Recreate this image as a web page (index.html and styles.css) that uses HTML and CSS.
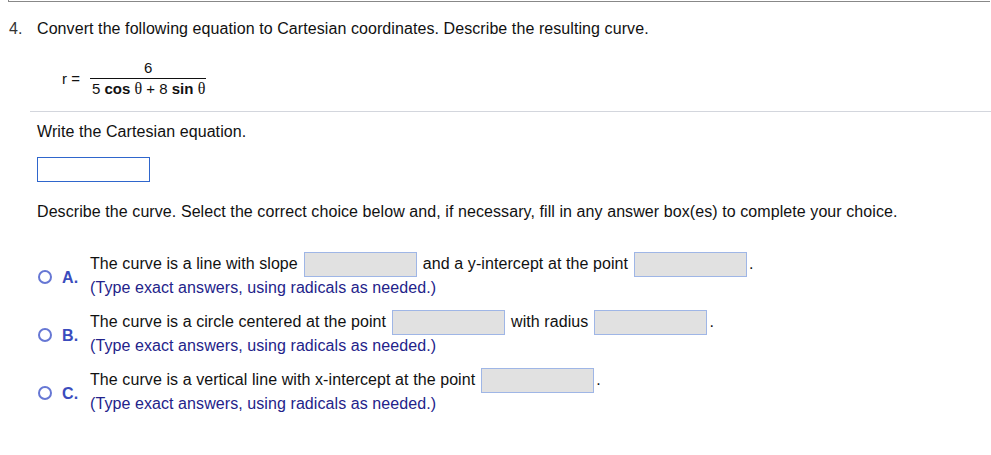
FILE: index.html
```html
<!DOCTYPE html>
<html>
<head>
<meta charset="utf-8">
<link rel="stylesheet" href="styles.css">
</head>
<body>
<div class="topbar"></div>
<div class="question">
  <div class="num">4.</div>
  <div class="title">Convert the following equation to Cartesian coordinates. Describe the resulting curve.</div>
</div>
<div class="equation">
  <span class="lhs">r =</span>
  <span class="frac">
    <span class="numer">6</span>
    <span class="denom">5 <b>cos</b> <span class="th">θ</span> + 8 <b>sin</b> <span class="th">θ</span></span>
  </span>
</div>
<div class="sep"></div>
<div class="body">
  <p class="prompt">Write the Cartesian equation.</p>
  <div class="eqbox"></div>
  <p class="prompt2">Describe the curve. Select the correct choice below and, if necessary, fill in any answer box(es) to complete your choice.</p>

  <div class="choices">
    <div class="choice">
      <span class="radio"></span><span class="letter">A.</span>
      <div class="ctext">
        <div class="line1">The curve is a line with slope<span class="box"></span>and a y-intercept at the point<span class="box"></span><span class="dot">.</span></div>
        <div class="hint">(Type exact answers, using radicals as needed.)</div>
      </div>
    </div>
    <div class="choice">
      <span class="radio"></span><span class="letter">B.</span>
      <div class="ctext">
        <div class="line1">The curve is a circle centered at the point<span class="box"></span>with radius<span class="box"></span><span class="dot">.</span></div>
        <div class="hint">(Type exact answers, using radicals as needed.)</div>
      </div>
    </div>
    <div class="choice">
      <span class="radio"></span><span class="letter">C.</span>
      <div class="ctext">
        <div class="line1">The curve is a vertical line with x-intercept at the point<span class="box"></span><span class="dot">.</span></div>
        <div class="hint">(Type exact answers, using radicals as needed.)</div>
      </div>
    </div>
  </div>
</div>
</body>
</html>
```
FILE: styles.css
```css
html, body {
  margin: 0;
  padding: 0;
  background: #fff;
}
body {
  font-family: "Liberation Sans", Arial, sans-serif;
  font-size: 16px;
  letter-spacing: 0.08px;
  color: #111;
  line-height: 18px;
}
.topbar {
  margin-left: 8px;
  margin-right: 1px;
  height: 1px;
  border-left: 1px solid #888;
  border-bottom: 1px solid #888;
}
.question {
  display: flex;
  margin-top: 18px;
}
.num {
  padding-left: 9px;
  box-sizing: border-box;
  width: 37px;
  color: #333;
}
.equation {
  display: flex;
  align-items: center;
  margin-left: 62px;
  margin-top: 21px;
  font-size: 15px;
  letter-spacing: 0;
}
.lhs {
  margin-right: 10px;
  margin-top: 2px;
}
.frac {
  display: inline-flex;
  flex-direction: column;
  align-items: center;
}
.numer {
  line-height: 17px;
  padding-bottom: 2px;
}
.denom {
  border-top: 1px solid #111;
  padding: 1px 1px 0 2px;
  line-height: 17px;
}
.denom b {
  font-weight: bold;
}
.th {
  font-family: "Liberation Serif", "Times New Roman", serif;
  font-size: 16px;
}
.sep {
  margin-left: 30px;
  margin-top: 14px;
  height: 1px;
  background: #d3d6dd;
}
.body {
  padding-left: 37px;
}
.prompt {
  margin: 11px 0 0 0;
}
.eqbox {
  margin-top: 16px;
  width: 111px;
  height: 23px;
  border: 1px solid #2f66cc;
}
.prompt2 {
  margin: 21px 0 0 0;
}
.choices {
  margin-top: 30px;
  display: flex;
  flex-direction: column;
  gap: 12px;
}
.choice {
  display: flex;
  align-items: flex-start;
}
.radio {
  flex: none;
  width: 10px;
  height: 10px;
  border: 2px solid #6677d4;
  border-radius: 50%;
  margin-top: 19px;
  margin-left: 1px;
}
.letter {
  flex: none;
  width: 28px;
  margin-left: 10px;
  margin-top: 18px;
  font-weight: bold;
  color: #3a4cbd;
}
.line1 {
  display: flex;
  align-items: center;
  height: 26px;
}
.box {
  display: inline-block;
  width: 111px;
  height: 23px;
  background: #e1e1e1;
  border: 1px solid #9fb6e6;
  margin: 0 6px;
}
.dot {
  margin-left: -4px;
}
.hint {
  margin-top: 2px;
  color: #23238a;
}
```
